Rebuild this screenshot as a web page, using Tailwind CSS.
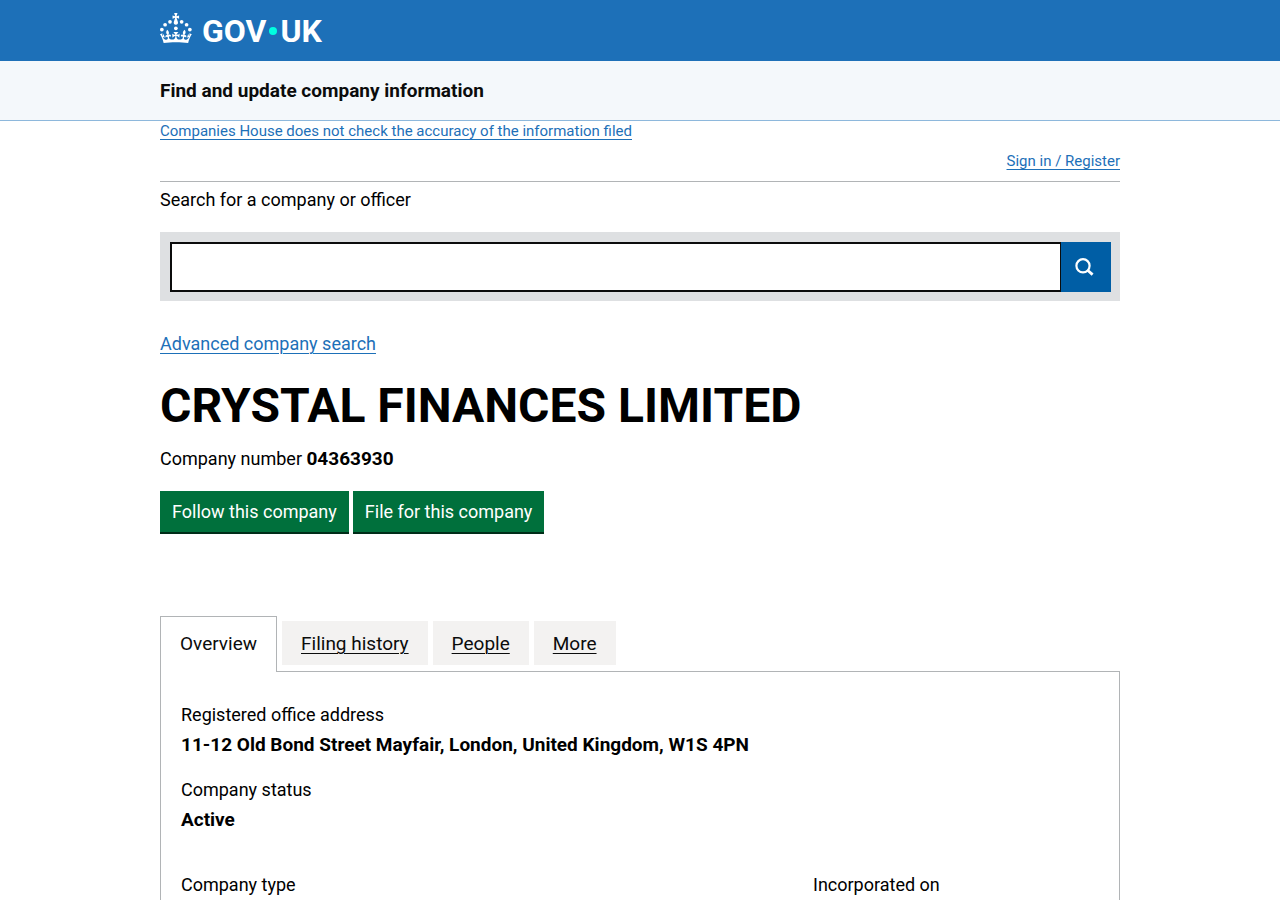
<!DOCTYPE html>
<html lang="en">
<head>
    <meta charset="UTF-8">
    <meta name="viewport" content="width=device-width, initial-scale=1.0">
    <title>CRYSTAL FINANCES LIMITED overview - Find and update company information - GOV.UK</title>
    <script src="https://cdn.jsdelivr.net/npm/@tailwindcss/browser@4"></script>
</head>
<body class="min-h-screen flex flex-col bg-white text-black font-['Roboto','Liberation_Sans',sans-serif] text-[18px] leading-[30px]">

    <!-- GOV.UK header -->
    <header class="bg-[#1d70b8]">
        <div class="max-w-[960px] mx-auto h-[61px] flex items-center">
            <a href="#" class="flex items-center text-white pb-[5px]" aria-label="GOV.UK">
                <svg class="w-8 h-[30px] mr-[10px]" viewBox="0 0 64 60" fill="currentColor" aria-hidden="true">
                    <circle cx="20" cy="17.6" r="3.7"/>
                    <circle cx="10.2" cy="23.5" r="3.7"/>
                    <circle cx="3.7" cy="33.2" r="3.7"/>
                    <circle cx="31.7" cy="30.6" r="3.7"/>
                    <circle cx="43.3" cy="17.6" r="3.7"/>
                    <circle cx="53.2" cy="23.5" r="3.7"/>
                    <circle cx="59.7" cy="33.2" r="3.7"/>
                    <path d="M33.1,9.8c.2-.1.3-.3.5-.5l4.6,2.4v-6.8l-4.6,1.5c-.1-.2-.3-.3-.5-.5l1.9-5.9h-6.7l1.9,5.9c-.2.1-.3.3-.5.5l-4.6-1.5v6.8l4.6-2.4c.1.2.3.3.5.5l-2.6,8c-.9,2.8,1.2,5.7,4.1,5.7h0c3,0,5.1-2.9,4.1-5.7l-2.6-8ZM37,37.9s-3.4,3.8-4.1,6.1c2.2,0,4.2-.5,6.4-2.8l-.7,8.5c-2-2.8-4.4-4.1-5.7-3.8.1,3.1.5,6.7,5.8,7.2,3.7.3,6.7-1.5,7-3.8.4-2.6-2-4.3-3.7-1.6-1.4-4.5,2.4-6.1,4.9-3.2-1.9-4.5-1.8-7.7,2.4-10.9,3,4,2.6,7.3-1.2,11.1,2.4-1.3,6.2,0,4,4.6-1.2-2.8-3.7-2.2-4.2.2-.3,1.7.7,3.7,3,4.2,1.9.3,4.7-.9,7-5.9-1.3,0-2.4.7-3.9,1.7l2.4-8c.6,2.3,1.4,3.7,2.2,4.5.6-1.6.5-2.8,0-5.3l5,1.8c-2.6,3.6-5.2,8.7-7.3,17.5-7.4-1.1-15.7-1.7-24.5-1.7h0c-8.8,0-17.1.6-24.5,1.7-2.1-8.9-4.7-13.9-7.3-17.5l5-1.8c-.5,2.5-.6,3.7,0,5.3.8-.8,1.6-2.3,2.2-4.5l2.4,8c-1.5-1-2.6-1.7-3.9-1.7,2.3,5,5.2,6.2,7,5.9,2.3-.4,3.3-2.4,3-4.2-.5-2.4-3-3.1-4.2-.2-2.2-4.6,1.6-6,4-4.6-3.7-3.7-4.2-7.1-1.2-11.1,4.2,3.2,4.3,6.4,2.4,10.9,2.5-2.8,6.3-1.3,4.9,3.2-1.8-2.7-4.1-1-3.7,1.6.3,2.3,3.3,4.1,7,3.8,5.4-.5,5.7-4.2,5.8-7.2-1.3-.2-3.7,1-5.7,3.8l-.7-8.5c2.2,2.3,4.2,2.7,6.4,2.8-.7-2.3-4.1-6.1-4.1-6.1h10.6,0Z"/>
                </svg>
                <span class="flex items-center text-[32px] leading-[30px] font-bold pt-[5px]">
                    <span>GOV</span>
                    <span class="size-2 mx-[3px] rounded-full bg-[#00ffe0]"></span>
                    <span>UK</span>
                </span>
            </a>
        </div>
    </header>

    <!-- Service name -->
    <div class="bg-[#f4f8fb] border-b border-[#8eb8dc]">
        <div class="max-w-[960px] mx-auto h-[59px] flex items-center">
            <a href="#" class="text-[19px] font-bold text-[#0b0c0c]">Find and update company information</a>
        </div>
    </div>

    <main class="w-full max-w-[960px] mx-auto flex-1 flex flex-col">
        <p class="text-[15px] leading-5"><a href="#" class="text-[#1d70b8] underline underline-offset-3 decoration-1">Companies House does not check the accuracy of the information filed</a></p>
        <div class="flex justify-end pt-[10px] pb-[10px] text-[15px] leading-5 border-b border-[#b1b4b6]">
            <a href="#" class="text-[#1d70b8] underline underline-offset-3 decoration-1">Sign in / Register</a>
        </div>

        <!-- Search -->
        <form class="pt-[3px]">
            <label for="search" class="block">Search for a company or officer</label>
            <div class="mt-[17px] flex bg-[#dee0e2] p-[10px] pr-[9px] pb-[9px]">
                <input id="search" type="search" class="flex-1 min-w-0 h-[50px] bg-white border-2 border-r border-[#0b0c0c] px-2 outline-none">
                <button type="submit" class="w-[50px] h-[50px] bg-[#005ea5] text-white flex items-center justify-center" aria-label="Search">
                    <svg class="size-5 mr-1" viewBox="0 0 20 20" fill="none" stroke="currentColor" aria-hidden="true">
                        <circle cx="9" cy="8.8" r="6.6" stroke-width="2.2"/>
                        <path d="M13.6 13.2L18.6 17.6" stroke-width="2.8"/>
                    </svg>
                </button>
            </div>
        </form>
        <p class="mt-[28px]"><a href="#" class="text-[#1d70b8] underline underline-offset-3 decoration-1">Advanced company search</a></p>

        <!-- Company heading -->
        <h1 class="mt-[22px] text-[48px] leading-[50px] font-bold">CRYSTAL FINANCES LIMITED</h1>
        <p class="mt-[13px]">Company number <strong class="text-[19px]">04363930</strong></p>
        <div class="mt-[17px] flex gap-1 text-white">
            <button type="button" class="h-[43px] px-3 bg-[#00703c] border-b-2 border-[#002d18]">Follow this company</button>
            <button type="button" class="h-[43px] px-3 bg-[#00703c] border-b-2 border-[#002d18]">File for this company</button>
        </div>

        <!-- Tabs -->
        <nav class="mt-[82px] flex items-start gap-[5px] text-[19px] text-[#0b0c0c]" aria-label="Company">
            <a href="#" class="relative h-[56px] -mb-px px-[19px] pt-3 bg-white border border-b-0 border-[#b1b4b6]">Overview</a>
            <a href="#" class="mt-[5px] h-11 px-[19px] pt-2 bg-[#f3f2f1] underline underline-offset-3 decoration-1">Filing history</a>
            <a href="#" class="mt-[5px] h-11 px-[19px] pt-2 bg-[#f3f2f1] underline underline-offset-3 decoration-1">People</a>
            <a href="#" class="mt-[5px] h-11 px-[19px] pt-2 bg-[#f3f2f1] underline underline-offset-3 decoration-1">More</a>
        </nav>
        <section class="flex-1 border border-b-0 border-[#b1b4b6] px-5 pt-[28px]">
            <dl>
                <dt>Registered office address</dt>
                <dd class="text-[19px] font-bold">11-12 Old Bond Street Mayfair, London, United Kingdom, W1S 4PN</dd>
            </dl>
            <dl class="mt-[15px]">
                <dt>Company status</dt>
                <dd class="text-[19px] font-bold">Active</dd>
            </dl>
            <div class="mt-[35px] grid grid-cols-[2fr_1fr] gap-[60px]">
                <dl>
                    <dt>Company type</dt>
                </dl>
                <dl>
                    <dt>Incorporated on</dt>
                </dl>
            </div>
        </section>
    </main>

</body>
</html>
